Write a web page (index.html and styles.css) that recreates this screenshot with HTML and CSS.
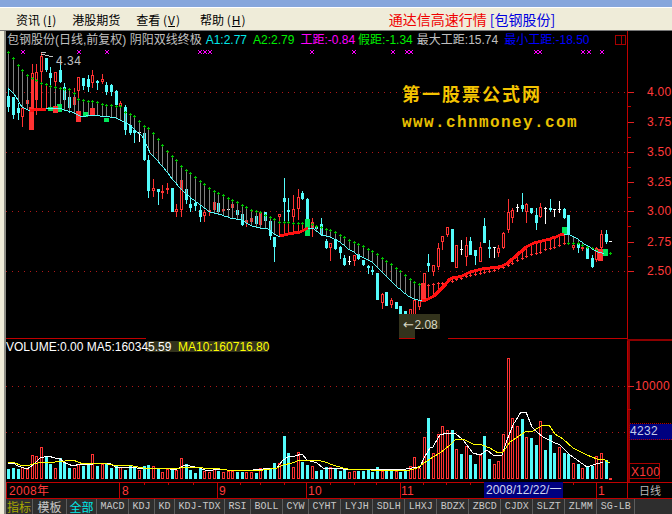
FILE: index.html
```html
<!DOCTYPE html>
<html lang="zh">
<head>
    <meta charset="UTF-8">
    <meta name="viewport" content="width=device-width, initial-scale=1.0">
    <title>通达信高速行情 包钢股份</title>
    <link rel="stylesheet" href="styles.css">
</head>
<body>

<div class="window">
    <div class="caption"></div>

    <div class="menubar">
        <span class="menu-item">资讯 (<u>I</u>)</span>
        <span class="menu-item">港股期货</span>
        <span class="menu-item">查看 (<u>V</u>)</span>
        <span class="menu-item">帮助 (<u>H</u>)</span>
        <span class="brand">通达信高速行情 <span class="brand-stock">[包钢股份]</span></span>
    </div>

    <div class="screen">
        <div class="edge"></div>
        <div class="panel">
            <div class="chart">
                <div class="quote-row">
                    <span class="q-name q-title">包钢股份(日线,前复权) 阴阳双线终极</span>
                    <span class="q-cyan">A1:2.77</span>
                    <span class="q-lime">A2:2.79</span>
                    <span class="q-pink">工距:-0.84</span>
                    <span class="q-lime q-false">假距:-1.34</span>
                    <span class="q-name q-max">最大工距:15.74</span>
                    <span class="q-blue">最小工距:-18.50</span>
                </div>

                <svg class="plot" viewBox="6 31 666 468" xmlns="http://www.w3.org/2000/svg">
                    <!-- small layout button in the corner of the price pane -->
                    <rect x="615.5" y="35.5" width="10" height="9" class="box"/>
                    <line x1="621" y1="35" x2="621" y2="44" class="box"/>

                    <g id="grid"></g>
                    <g id="candles"></g>
                    <g id="marks"></g>
                    <g id="volume"></g>

                    <!-- price pane labels -->
                    <text x="402" y="101" class="brand-cn">第一股票公式网</text>
                    <text x="402" y="127" class="brand-url">www.chnmoney.com</text>
                    <path d="M41 52h5M41 54l12 3" class="peak"/>
                    <text x="56" y="65" class="peak-text">4.34</text>

                    <rect x="399" y="314" width="16" height="24" class="shade"/>
                    <rect x="415" y="314" width="25" height="15" class="shade"/>
                    <text x="403" y="329" class="low-text"><tspan class="low-arrow">←</tspan>2.08</text>

                    <!-- volume pane labels -->
                    <rect x="147" y="341" width="121" height="11" class="shade"/>
                    <text x="6" y="351" class="vol-text">VOLUME:0.00 MA5:160345.59</text>
                    <text x="178" y="351" class="vol-text ma10">MA10:160716.80</text>

                    <!-- right hand scale -->
                    <g class="scale">
                        <text x="647" y="96">4.00</text>
                        <text x="647" y="126">3.75</text>
                        <text x="647" y="156">3.50</text>
                        <text x="647" y="186">3.25</text>
                        <text x="647" y="215">3.00</text>
                        <text x="647" y="246">2.75</text>
                        <text x="647" y="275">2.50</text>
                        <text x="635" y="390">10000</text>
                    </g>
                    <rect x="629.5" y="423.5" width="43" height="16" class="cur-box"/>
                    <text x="630" y="435" class="cur-text">4232</text>
                    <rect x="629.5" y="463.5" width="30" height="15" class="box"/>
                    <text x="631" y="476" class="scale-text">X100</text>

                    <!-- date strip -->
                    <g class="scale">
                        <text x="9" y="495">2008年</text>
                        <text x="122" y="495">8</text>
                        <text x="219" y="495">9</text>
                        <text x="308" y="495">10</text>
                        <text x="401" y="495">11</text>
                        <text x="598" y="495">1</text>
                    </g>
                    <rect x="484" y="482" width="79" height="16" class="date-box"/>
                    <text x="486" y="494" class="date-text">2008/12/22/一</text>
                    <text x="639" y="495" class="period">日线</text>
                </svg>
            </div>

            <div class="tabs">
                <span class="tab tab-cn tab-olive">指标</span>
                <span class="tab tab-cn tab-plain">模板</span>
                <span class="tab tab-cn tab-cyan">全部</span>
                <span class="tab">MACD</span>
                <span class="tab">KDJ</span>
                <span class="tab">KD</span>
                <span class="tab">KDJ-TDX</span>
                <span class="tab">RSI</span>
                <span class="tab">BOLL</span>
                <span class="tab">CYW</span>
                <span class="tab">CYHT</span>
                <span class="tab">LYJH</span>
                <span class="tab">SDLH</span>
                <span class="tab">LHXJ</span>
                <span class="tab">BDZX</span>
                <span class="tab">ZBCD</span>
                <span class="tab">CJDX</span>
                <span class="tab">SLZT</span>
                <span class="tab">ZLMM</span>
                <span class="tab">SG-LB</span>
            </div>
        </div>
    </div>
</div>

<script src="chart.js"></script>

</body>
</html>
```

FILE: styles.css
```css
body {
    margin: 0;
    background: #000;
    font-family: "Liberation Sans", "Noto Sans CJK SC", sans-serif;
}
.window {
    width: 672px;
    height: 514px;
    overflow: hidden;
    display: flex;
    flex-direction: column;
}
.caption {
    height: 7px;
    background: #86a6dc;
    border-bottom: 1px solid #fff;
}
.menubar {
    height: 22px;
    padding-left: 16px;
    display: flex;
    align-items: center;
    gap: 16px;
    background: #efecd9;
    border-bottom: 1px solid #777;
    font: 12px "Noto Sans CJK SC", sans-serif;
    color: #000;
}
.menu-item u {
    padding: 0 1px;
}
.menu-item:nth-child(4) {
    margin-left: 4px;
}
.brand {
    margin-left: 127px;
    font-size: 14px;
    color: #f00000;
}
.brand-stock {
    color: #0000e0;
}
.screen {
    flex: 1;
    display: flex;
    min-height: 0;
}
.edge {
    width: 4px;
    background: #efecd9;
    border-right: 2px solid #8c8c84;
}
.panel {
    flex: 1;
    display: flex;
    flex-direction: column;
    min-width: 0;
}
.chart {
    position: relative;
    height: 468px;
}
.plot {
    display: block;
    width: 666px;
    height: 468px;
    shape-rendering: crispEdges;
}
.quote-row {
    position: absolute;
    left: 1px;
    top: 1px;
    display: flex;
    gap: 6px;
    font: 12px/16px "Liberation Sans", "Noto Sans CJK SC", sans-serif;
    white-space: nowrap;
}
.q-title {
    margin-right: -2px;
}
.q-false {
    margin-left: -3px;
}
.q-max {
    margin-left: -2px;
}
.q-name { color: #c0c0c0; }
.q-cyan { color: #00e8e8; }
.q-lime { color: #00f000; }
.q-pink { color: #ff00ff; }
.q-blue { color: #0000ff; }

.box {
    fill: none;
    stroke: #a80000;
}
.brand-cn {
    font: bold 18px "Noto Sans CJK SC", sans-serif;
    letter-spacing: 2px;
    fill: #f4c400;
}
.brand-url {
    font: bold 16px "Liberation Mono", monospace;
    letter-spacing: 1.4px;
    fill: #e8c000;
}
.peak {
    fill: none;
    stroke: #c0c0c0;
}
.peak-text {
    font-size: 12px;
    letter-spacing: .5px;
    fill: #c0c0c0;
}
.shade {
    fill: #33331c;
}
.low-text {
    font-size: 12px;
    fill: #d8d8c4;
}
.low-arrow {
    font-family: "DejaVu Sans", sans-serif;
    font-size: 13px;
    letter-spacing: .5px;
}
.vol-text {
    font-size: 12px;
    fill: #fff;
}
.ma10 {
    fill: #ffff00;
}
.scale text,
.scale-text {
    font-size: 12px;
    letter-spacing: .3px;
    fill: #ff3a3a;
}
.cur-box {
    fill: #000080;
    stroke: #b00000;
    stroke-dasharray: 1 1;
}
.cur-text {
    font-size: 12px;
    letter-spacing: .3px;
    fill: #c4cce8;
}
.date-box {
    fill: #000080;
}
.date-text {
    font-size: 12px;
    fill: #d0d8f0;
}
.period {
    font: 11px "Noto Sans CJK SC", sans-serif;
    fill: #b8b8b8;
}
.tabs {
    flex: 1;
    display: flex;
    align-items: center;
    background: #2e2e2e;
    font: 10px "Liberation Mono", monospace;
    color: #c8c8c8;
}
.tab {
    padding: 0 3.5px;
    border-right: 1px solid #5c5c5c;
    line-height: 15px;
}
.tab-cn {
    padding: 0;
    text-align: center;
    font: 12px/15px "Noto Sans CJK SC", sans-serif;
}
.tab-olive { width: 26px; color: #a8a800; }
.tab-plain { width: 33px; }
.tab-cyan { width: 29px; color: #00e8e8; }
```

FILE: chart.js
```js
const NS = 'http://www.w3.org/2000/svg';
const CYAN = '#54fcfc';
const RED = '#ff3232';
const GREEN = '#00e85c';
const TIP = '#00c000';
const GRAY = '#808080';
const WHITE = '#ffffff';

// candle x position on screen
function barX(i) {
    return Math.round(8.3 + i * 4.667);
}

function add(group, tag, attrs) {
    const el = document.createElementNS(NS, tag);
    for (const k in attrs) el.setAttribute(k, attrs[k]);
    group.appendChild(el);
    return el;
}

function rect(group, x, y, w, h, fill) {
    return add(group, 'rect', { x, y, width: w, height: h, fill });
}

function hollow(group, x, y, w, h, color) {
    return add(group, 'rect', {
        x: x + 0.5, y: y + 0.5, width: w - 1, height: Math.max(h - 1, 1),
        fill: '#000', stroke: color
    });
}

// straight interpolation between [x, y] key points
function lerp(points, x) {
    if (x <= points[0][0]) return points[0][1];
    for (let i = 1; i < points.length; i++) {
        if (x <= points[i][0]) {
            const a = points[i - 1], b = points[i];
            return a[1] + (b[1] - a[1]) * (x - a[0]) / (b[0] - a[0]);
        }
    }
    return points[points.length - 1][1];
}

function pathOf(points, color, width) {
    return {
        points: points.map(p => p.join(',')).join(' '),
        fill: 'none', stroke: color, 'stroke-width': width
    };
}

// r = up day, c = down day
const kinds =
    'cccrrrrrcc' + 'rcccrrccrc' + 'rcccrcccrc' + 'crcrrcrrcc' + 'ccrrrc' +
    'rrrccrrcrc' + 'ccrccrrccr' + 'cccrcccrrc' + 'ccccrccrcc' + 'rrrrcrr' +
    'rrcrcrccrc' + 'crrrrrrcrc' + 'crcccrccrc' + 'rccrrcr';

// top, bottom, high, low in screen pixels. top === bottom draws a white doji
const candles = [
    [96,107,88,112],[97,115,97,119],[108,113,103,120],[108,117,100,127],[100,104,100,106],
    [73,130,64,130],[72,100,64,115],[56,72,52,87],[58,70,58,72],[73,78,67,90],
    [72,82,72,93],[70,82,60,83],[87,100,83,110],[97,108,88,113],[97,105,88,112],
    [77,91,77,105],[78,86,78,90],[79,87,75,92],[75,83,70,88],[81,83,80,90],
    [79,82,74,84],[85,92,82,95],[85,92,84,96],[91,105,90,106],[103,106,101,115],
    [107,130,105,135],[125,133,118,135],[130,133,128,143],[132,132,125,142],[133,160,128,161],
    [160,191,155,198],[188,191,179,197],[189,192,189,205],[191,193,185,199],[188,190,183,194],
    [188,212,188,212],[209,212,204,217],[180,210,180,217],[189,200,189,204],[204,208,198,212],
    [203,206,198,211],[210,217,205,222],[212,216,210,222],[210,212,208,216],[202,210,200,212],
    [203,212,203,212],[209,211,207,213],[209,209,208,213],[204,208,200,210],[210,215,208,216],
    [214,225,213,226],[220,223,218,227],[218,222,217,224],[216,224,216,225],[212,225,211,226],
    [212,221,212,222],[221,236,220,240],[237,247,237,262],[214,217,214,237],[198,202,178,222],
    [210,212,198,223],[209,217,195,223],[197,209,189,220],[193,199,191,200],[199,230,198,236],
    [222,229,218,237],[227,229,225,232],[224,235,218,236],[241,248,239,249],[243,248,243,261],
    [239,249,235,250],[247,253,246,259],[258,265,255,266],[261,261,256,265],[255,261,255,266],
    [254,259,254,260],[260,265,260,266],[266,268,265,274],[270,272,266,275],[273,300,273,300],
    [294,303,293,309],[292,306,292,306],[300,305,298,308,'r'],[302,309,302,309,'c'],[306,314,306,314],
    [311,321,311,321],[309,319,309,319],[300,316,300,319],[300,307,290,310],[273,302,273,302],
    [263,266,254,272],[265,272,265,276],[248,267,243,270],[236,242,236,250],[227,235,227,237],
    [229,262,229,262],[245,268,245,268],[249,249,240,255],[245,257,237,266],[241,255,237,255],
    [250,256,250,265],[247,262,242,262],[226,243,218,243],[247,249,240,258],[247,247,247,258],
    [248,253,245,257],[233,248,232,249],[212,230,199,233],[210,218,208,223],[207,207,204,212],
    [205,209,193,212],[204,212,203,223],[208,213,208,214],[215,223,208,230],[207,217,203,218],
    [208,208,207,224],[208,210,199,212],[209,209,209,217],[209,209,201,213],[209,218,208,219],
    [215,235,215,235],[245,248,243,250],[243,248,243,253],[247,248,246,251],[248,259,246,259],
    [258,267,255,268],[248,260,247,262],[234,248,230,252],[234,242,230,244],[241,241,241,241]
];

// solid bodies of the second day layer: x, top, height, colour
const solidBodies = [
    [48,107,4,GREEN],[57,104,8,GREEN],[83,112,5,GREEN],[104,118,4,GREEN],
    [29,107,23,RED],[53,106,7,RED],[76,111,11,RED],[90,108,8,RED],
    [305,219,17,GREEN],[562,227,7,GREEN],[603,249,7,GREEN],
    [421,283,19,RED],[598,249,12,RED]
];

// moving average line, thin cyan falling and thick red rising
const maKeys = [
    [8,88],[13,93],[18,100],[22,107],[27,110],[44,109],[48,108],[60,108],[65,110],[72,112],
    [80,116],[95,115],[105,116],[115,117],[125,122],[130,125],[135,130],[143,137],[150,153],
    [157,160],[167,172],[173,180],[182,190],[190,197],[200,205],[210,212],[220,214],[230,218],
    [240,219],[250,225],[260,228],[267,228],[277,236],[280,236],[290,233],[300,232],[307,228],
    [313,228],[320,234],[330,237],[340,242],[347,248],[355,253],[373,263],[383,273],[397,287],
    [407,295],[413,299],[422,300],[423,301],[433,297],[443,287],[451,278],[461,276],[469,272],
    [486,268],[503,266],[509,262],[519,253],[529,245],[536,242],[549,239],[563,234],[569,234],
    [576,238],[586,245],[596,251],[604,253]
];
const risingSpans = [[29, 46], [279, 308], [422, 565]];

// second line, joined to the average by a stem on every day
const tipKeys = [
    [8,52],[13,58],[22,70],[27,75],[41,83],[55,87],[65,89],[69,89],[74,93],[79,100],[92,101],
    [107,105],[121,106],[125,112],[135,116],[143,125],[148,128],[153,133],[167,151],[177,161],
    [181,166],[195,177],[209,188],[218,193],[237,202],[251,210],[260,212],[269,217],[274,219],
    [279,222],[302,223],[311,224],[326,229],[335,232],[349,240],[367,248],[381,257],[396,268],
    [414,282],[419,284],[428,285],[441,283],[451,281],[469,275],[486,272],[503,267],[513,262],
    [523,257],[531,254],[539,252],[546,249],[554,247],[563,243],[578,243],[583,245],[588,247],
    [593,248],[598,251],[606,253],[610,253]
];

// tops of the volume bars, bottom edge is 479
const volumeTops = [
    469,468,469,467,469,455,456,447,456,464,468,458,462,468,468,464,466,464,454,466,464,464,468,
    466,467,470,466,467,470,466,465,466,468,472,469,468,470,458,464,470,473,468,471,472,469,471,
    472,471,471,472,472,472,472,473,468,468,469,463,463,436,453,467,452,462,465,466,471,470,467,
    467,468,471,470,472,471,471,471,470,472,467,471,471,470,471,472,471,466,457,468,437,418,453,434,
    426,430,430,449,454,446,455,464,455,436,459,464,461,434,358,418,426,419,437,438,445,421,450,435,
    453,447,453,454,463,464,468,466,466,456,453,460,478
];

const volMa5 = [
    [8,463],[13,463],[18,466],[27,469],[33,465],[40,458],[48,456],[55,458],[60,458],[63,462],[73,466],
    [80,464],[93,464],[110,463],[115,467],[133,467],[137,468],[160,468],[170,469],[177,469],[185,465],
    [200,468],[207,471],[220,469],[227,470],[253,470],[263,469],[277,468],[283,460],[288,457],[295,456],
    [302,454],[307,460],[317,463],[323,468],[343,469],[350,469],[400,470],[412,468],[420,467],[424,458],
    [430,448],[433,447],[435,443],[440,435],[447,433],[455,433],[463,440],[473,453],[480,455],[487,450],
    [493,455],[502,455],[507,440],[513,425],[521,412],[526,412],[532,427],[537,432],[543,437],[553,442],
    [560,445],[570,455],[587,467],[593,465],[603,462]
];
const volMa10 = [
    [8,462],[15,463],[20,465],[27,466],[33,464],[43,462],[55,462],[65,461],[73,460],[83,464],[100,463],
    [113,465],[133,466],[143,468],[163,468],[167,469],[180,468],[190,467],[203,468],[220,469],[227,470],
    [253,471],[263,470],[277,468],[283,465],[292,463],[300,460],[317,460],[325,462],[333,465],[343,468],
    [348,469],[370,470],[407,471],[417,468],[424,463],[430,459],[440,453],[450,445],[455,440],[463,439],
    [473,444],[482,445],[490,448],[498,453],[503,452],[510,442],[525,432],[533,431],[543,425],[549,425],
    [555,434],[563,439],[573,448],[587,455],[597,459],[603,459],[610,463]
];

// dotted guides, solid pane rules and ticks
const grid = document.getElementById('grid');
[92, 152, 211, 271, 386, 432].forEach(y => {
    add(grid, 'line', {
        x1: 6, y1: y + 0.5, x2: 627, y2: y + 0.5,
        stroke: '#b01818', 'stroke-dasharray': '1 5'
    });
});
[[6, 146], [399, 415], [448, 627]].forEach(s => rect(grid, s[0], 338, s[1] - s[0], 1, '#c00000'));
rect(grid, 627, 31, 1, 451, '#c00000');
rect(grid, 628, 339, 2, 143, '#8c0000');
rect(grid, 627, 339, 45, 2, '#8c0000');
rect(grid, 6, 482, 666, 1, '#c00000');
rect(grid, 6, 498, 666, 1, '#c00000');
[92, 122, 152, 182, 211, 242, 271, 386].forEach(y => rect(grid, 628, y, 6, 1, '#e02020'));
[106, 137, 167, 197, 226, 256, 409].forEach(y => rect(grid, 628, y, 3, 1, '#c00000'));
[6, 119, 217, 306, 400, 596, 627].forEach(x => rect(grid, x, 482, 1, 16, '#c00000'));
[144, 168, 193, 240, 260, 284, 330, 354, 376, 423, 446, 470, 573].forEach(x => rect(grid, x, 482, 1, 3, '#c00000'));

// candles
const candleGroup = document.getElementById('candles');
candles.forEach((c, i) => {
    const x = barX(i);
    const kind = c[4] || kinds[i];
    if (c[0] === c[1]) {
        rect(candleGroup, x, c[2], 1, c[3] - c[2], WHITE);
        rect(candleGroup, x - 1, c[0], 3, 1, WHITE);
    } else if (kind === 'c') {
        rect(candleGroup, x, c[2], 1, c[3] - c[2], CYAN);
        rect(candleGroup, x - 1, c[0], 3, c[1] - c[0], CYAN);
    } else {
        rect(candleGroup, x, c[2], 1, c[3] - c[2], RED);
        hollow(candleGroup, x - 1, c[0], 3, c[1] - c[0], RED);
    }
});

// stems sit over the candles
const marks = document.getElementById('marks');
const rising = x => risingSpans.some(s => x >= s[0] && x <= s[1]);
candles.forEach((c, i) => {
    const x = barX(i);
    const tip = Math.round(lerp(tipKeys, x));
    const ma = Math.round(lerp(maKeys, x));
    const color = rising(x) ? RED : GRAY;
    rect(marks, x, Math.min(tip, ma), 1, Math.abs(ma - tip), color);
    const tipColor = x > 425 && x < 566 ? RED : TIP;
    rect(marks, x - 1, tip, 3, 1, tipColor);
    rect(marks, x, tip - 1, 1, 3, tipColor);
});

solidBodies.forEach(b => rect(marks, b[0], b[1], 5, b[2], b[3]));

// average line split into its cyan and red runs
const maPoints = [];
for (let x = 8; x <= 604; x += 2) maPoints.push([x, Math.round(lerp(maKeys, x))]);
add(marks, 'polyline', pathOf(maPoints, CYAN, 1));
risingSpans.forEach(s => {
    const run = maPoints.filter(p => p[0] >= s[0] && p[0] <= s[1]);
    add(marks, 'polyline', pathOf(run, '#ff1010', 3));
});

// magenta signal crosses along the top of the price pane
[23, 79, 107, 200, 205, 210, 312, 354, 393, 407, 411, 536, 540, 583, 589, 602].forEach(x => {
    add(marks, 'path', {
        d: `M${x - 2} 50l4 4M${x + 2} 50l-4 4`,
        stroke: '#ff00ff', fill: 'none'
    });
});

// volume bars and their averages
const volume = document.getElementById('volume');
volumeTops.forEach((top, i) => {
    const x = barX(i);
    if (kinds[i] === 'c') rect(volume, x - 1, top, 3, 479 - top, CYAN);
    else hollow(volume, x - 1, top, 3, 479 - top, RED);
});
add(volume, 'polyline', pathOf(volMa5, WHITE, 1));
add(volume, 'polyline', pathOf(volMa10, '#ffff00', 1));
```
